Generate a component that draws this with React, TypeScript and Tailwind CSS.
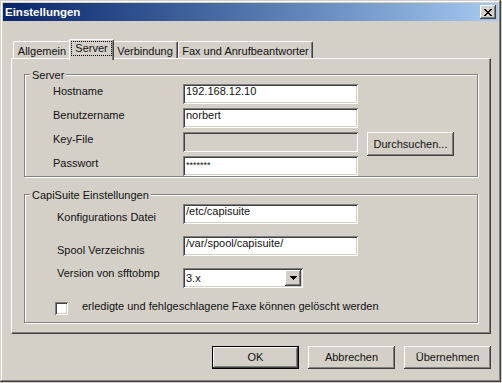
import type { ReactNode } from 'react';

const raised =
  'bg-[#d4d0c8] shadow-[inset_-1px_-1px_#404040,inset_1px_1px_#fff,inset_-2px_-2px_#808080,inset_2px_2px_#d4d0c8]';
const sunken =
  'shadow-[inset_1px_1px_#808080,inset_-1px_-1px_#fff,inset_2px_2px_#404040,inset_-2px_-2px_#d4d0c8]';

function Button({ label, isDefault = false }: { label: string; isDefault?: boolean }) {
  if (isDefault) {
    return (
      <div className="w-[87px] h-[23px] border border-black">
        <div className={`h-full flex items-center justify-center ${raised}`}>{label}</div>
      </div>
    );
  }
  return <div className={`w-[87px] h-[23px] flex items-center justify-center ${raised}`}>{label}</div>;
}

function TextBox({ value, disabled = false, small = false }: { value?: string; disabled?: boolean; small?: boolean }) {
  return (
    <div
      className={`w-[175px] h-[20px] pl-[3px] whitespace-nowrap overflow-hidden ${sunken} ${
        disabled ? 'bg-[#d4d0c8]' : 'bg-white'
      } ${small ? 'text-[9px] pt-[3px]' : 'pt-[1px]'}`}
    >
      {value}
    </div>
  );
}

function Tab({ label, width }: { label: string; width: string }) {
  return (
    <div
      className={`${width} h-[17px] pt-[3px] text-center border-l border-t border-white border-r border-r-[#404040] rounded-t-[2px] shadow-[inset_-1px_0_#808080]`}
    >
      {label}
    </div>
  );
}

function Group({ title, children, className }: { title: string; children: ReactNode; className: string }) {
  return (
    <div className={`mx-[12px] border border-[#808080] shadow-[inset_1px_1px_#fff,1px_1px_#fff] ${className}`}>
      <div className="-mt-[6px] ml-[5px] w-fit px-[2px] bg-[#d4d0c8]">{title}</div>
      {children}
    </div>
  );
}

function ServerRow({ label, children }: { label: string; children: ReactNode }) {
  return (
    <div className="flex items-start h-[20px] pl-[28px]">
      <div className="w-[130px] mt-[1px]">{label}</div>
      {children}
    </div>
  );
}

export default function App() {
  return (
    <div className="w-[502px] h-[383px] bg-[#d4d0c8] text-[#111] text-[11px] leading-[13px] font-['Liberation_Sans',Arial,sans-serif]">
      <div className="w-[501px] h-[382px] flex flex-col shadow-[inset_-1px_-1px_#404040,inset_1px_1px_#d4d0c8,inset_-2px_-2px_#808080,inset_2px_2px_#fff]">
        {/* Title bar */}
        <div className="mx-[3px] mt-[3px] h-[18px] flex items-center justify-between pl-[2px] pr-[2px] bg-linear-to-r from-[#0a246a] to-[#a6caf0]">
          <span className="font-bold text-white text-[11.5px]">Einstellungen</span>
          <div className={`w-[16px] h-[14px] flex items-center justify-center ${raised}`}>
            <svg width="8" height="7" viewBox="0 0 8 7" shapeRendering="crispEdges">
              <path
                fill="#000"
                d="M0 0h2v1H0zM6 0h2v1H6zM1 1h2v1H1zM5 1h2v1H5zM2 2h4v1H2zM3 3h2v1H3zM2 4h4v1H2zM1 5h2v1H1zM5 5h2v1H5zM0 6h2v1H0zM6 6h2v1H6z"
              />
            </svg>
          </div>
        </div>

        <div className="flex flex-col pl-[11px] pr-[10px]">
          {/* Tabs */}
          <div className="mt-[18px] h-[19px] flex items-end pl-[2px]">
            <Tab label="Allgemein" width="w-[58px]" />
            <div className="relative z-10 w-[45px] h-[21px] -mx-[2px] -mb-[2px] flex justify-center bg-[#d4d0c8] border-l border-t border-white border-r border-r-[#404040] rounded-t-[2px] shadow-[inset_-1px_0_#808080]">
              <span className="mt-[1px] h-[15px] px-[3px] border border-dotted border-black">Server</span>
            </div>
            <Tab label="Verbindung" width="w-[66px]" />
            <Tab label="Fax und Anrufbeantworter" width="w-[135px]" />
          </div>

          {/* Tab panel */}
          <div className="h-[276px] border-l border-t border-white border-r border-b border-r-[#404040] border-b-[#404040] shadow-[inset_-1px_-1px_#808080]">
            <Group title="Server" className="mt-[15px]">
              <div className="mt-[2px] flex flex-col gap-[4px]">
                <ServerRow label="Hostname">
                  <TextBox value="192.168.12.10" />
                </ServerRow>
                <ServerRow label="Benutzername">
                  <TextBox value="norbert" />
                </ServerRow>
                <ServerRow label="Key-File">
                  <TextBox disabled />
                  <div className={`ml-[9px] w-[87px] h-[24px] shrink-0 flex items-center justify-center ${raised}`}>
                    Durchsuchen...
                  </div>
                </ServerRow>
                <ServerRow label="Passwort">
                  <TextBox value="*******" small />
                </ServerRow>
              </div>
            </Group>

            <Group title="CapiSuite Einstellungen" className="mt-[17px] pb-[7px]">
              <div className="mt-[2px] flex items-start h-[20px] pl-[32px]">
                <div className="w-[126px] mt-[7px]">Konfigurations Datei</div>
                <TextBox value="/etc/capisuite" />
              </div>
              <div className="mt-[12px] flex items-start h-[20px] pl-[32px]">
                <div className="w-[126px] mt-[8px]">Spool Verzeichnis</div>
                <TextBox value="/var/spool/capisuite/" />
              </div>
              <div className="mt-[12px] flex items-start h-[20px] pl-[32px]">
                <div className="w-[126px] -mt-[1px]">Version von sfftobmp</div>
                <div className={`w-[120px] h-[20px] flex items-center justify-between bg-white pl-[3px] pr-[2px] ${sunken}`}>
                  <span>3.x</span>
                  <div className={`w-[16px] h-[16px] flex items-center justify-center ${raised}`}>
                    <svg width="7" height="4" viewBox="0 0 7 4" shapeRendering="crispEdges">
                      <path fill="#000" d="M0 0h7v1H0zM1 1h5v1H1zM2 2h3v1H2zM3 3h1v1H3z" />
                    </svg>
                  </div>
                </div>
              </div>
              <div className="mt-[14px] flex items-start h-[13px] pl-[30px] gap-[14px]">
                <div className={`w-[13px] h-[13px] bg-white ${sunken}`} />
                <span className="-mt-[2px]">erledigte und fehlgeschlagene Faxe können gelöscht werden</span>
              </div>
            </Group>
          </div>

          {/* Dialog buttons */}
          <div className="mt-[12px] flex justify-end gap-[9px]">
            <Button label="OK" isDefault />
            <Button label="Abbrechen" />
            <Button label="Übernehmen" />
          </div>
        </div>
      </div>
    </div>
  );
}
